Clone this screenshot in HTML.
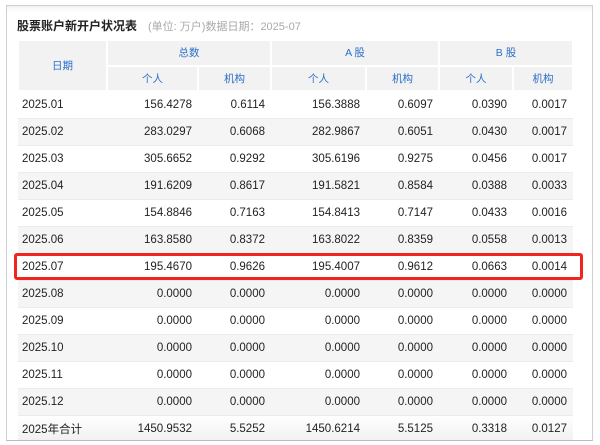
<!DOCTYPE html>
<html><head><meta charset="utf-8"><style>
*{margin:0;padding:0;box-sizing:border-box}
body{width:600px;height:445px;background:#fff;font-family:"Liberation Sans","Noto Sans CJK SC",sans-serif;position:relative;overflow:hidden}
.frame{position:absolute;left:6px;top:5px;width:587px;height:436px;border:1px solid #cfcfcf;border-bottom:1px solid #bbb;overflow:hidden;background:#fff}
.topsh{position:absolute;left:0;top:0;width:100%;height:6px;background:linear-gradient(#f3f3f3,#fff)}
.title{position:absolute;left:10px;top:11px;font-size:12px;font-weight:bold;color:#222}
.sub{position:absolute;left:141px;top:12px;font-size:11px;color:#aaa}
table{position:absolute;left:10px;top:33px;border-collapse:collapse;table-layout:fixed}
th{background:#f2f2f2;color:#2a6fc9;font-weight:normal;font-size:10.5px;border:2px solid #fff;height:25.5px;text-align:center}
td{height:27px;font-size:11.5px;color:#222;text-align:right;padding-right:6px;border-top:1px solid #ebebeb}
td:first-child{text-align:left;padding-left:4px}
tr.g td{background:#f5f5f5}
tr.t td{background:linear-gradient(#fff,#f0f0f0)}
.red{position:absolute;left:14px;top:253px;width:569px;height:27px;border:3px solid #f0261e;border-radius:3px}
</style></head><body>
<div class="frame"><div class="topsh"></div>
<div class="title">股票账户新开户状况表</div>
<div class="sub">(单位: 万户)数据日期：2025-07</div>
<table>
<colgroup><col style="width:89px"><col style="width:91px"><col style="width:73px"><col style="width:95px"><col style="width:73px"><col style="width:74px"><col style="width:60px"></colgroup>
<tr><th rowspan="2">日期</th><th colspan="2">总数</th><th colspan="2">A 股</th><th colspan="2">B 股</th></tr>
<tr><th>个人</th><th>机构</th><th>个人</th><th>机构</th><th>个人</th><th>机构</th></tr>
<tr><td>2025.01</td><td>156.4278</td><td>0.6114</td><td>156.3888</td><td>0.6097</td><td>0.0390</td><td>0.0017</td></tr>
<tr class="g"><td>2025.02</td><td>283.0297</td><td>0.6068</td><td>282.9867</td><td>0.6051</td><td>0.0430</td><td>0.0017</td></tr>
<tr><td>2025.03</td><td>305.6652</td><td>0.9292</td><td>305.6196</td><td>0.9275</td><td>0.0456</td><td>0.0017</td></tr>
<tr class="g"><td>2025.04</td><td>191.6209</td><td>0.8617</td><td>191.5821</td><td>0.8584</td><td>0.0388</td><td>0.0033</td></tr>
<tr><td>2025.05</td><td>154.8846</td><td>0.7163</td><td>154.8413</td><td>0.7147</td><td>0.0433</td><td>0.0016</td></tr>
<tr class="g"><td>2025.06</td><td>163.8580</td><td>0.8372</td><td>163.8022</td><td>0.8359</td><td>0.0558</td><td>0.0013</td></tr>
<tr><td>2025.07</td><td>195.4670</td><td>0.9626</td><td>195.4007</td><td>0.9612</td><td>0.0663</td><td>0.0014</td></tr>
<tr class="g"><td>2025.08</td><td>0.0000</td><td>0.0000</td><td>0.0000</td><td>0.0000</td><td>0.0000</td><td>0.0000</td></tr>
<tr><td>2025.09</td><td>0.0000</td><td>0.0000</td><td>0.0000</td><td>0.0000</td><td>0.0000</td><td>0.0000</td></tr>
<tr class="g"><td>2025.10</td><td>0.0000</td><td>0.0000</td><td>0.0000</td><td>0.0000</td><td>0.0000</td><td>0.0000</td></tr>
<tr><td>2025.11</td><td>0.0000</td><td>0.0000</td><td>0.0000</td><td>0.0000</td><td>0.0000</td><td>0.0000</td></tr>
<tr class="g"><td>2025.12</td><td>0.0000</td><td>0.0000</td><td>0.0000</td><td>0.0000</td><td>0.0000</td><td>0.0000</td></tr>
<tr class="t"><td>2025年合计</td><td>1450.9532</td><td>5.5252</td><td>1450.6214</td><td>5.5125</td><td>0.3318</td><td>0.0127</td></tr>
</table>
</div>
<div class="red"></div>
</body></html>
